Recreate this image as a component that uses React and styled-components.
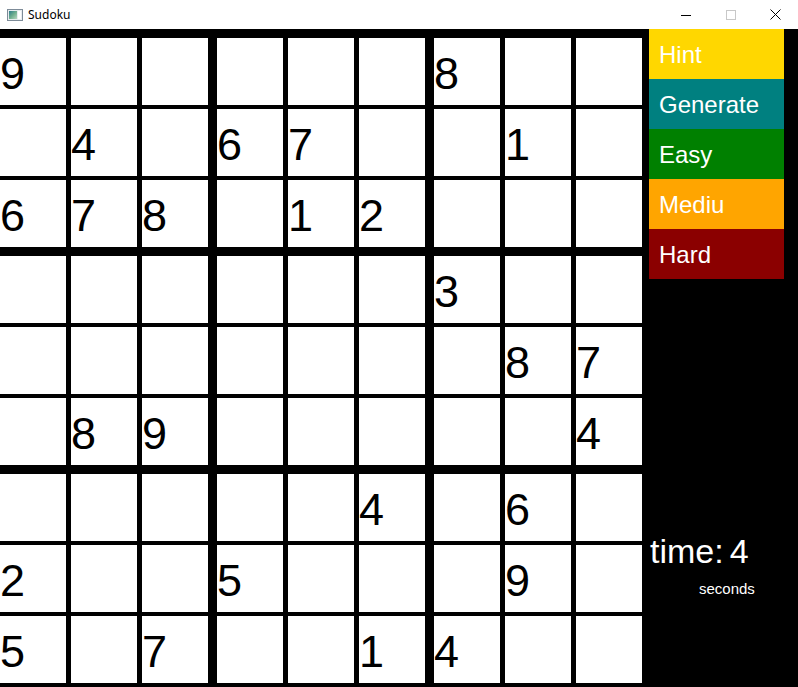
import React from 'react';
import styled, { createGlobalStyle } from 'styled-components';

/// /////////////////////////////////////////////
// data
/// /////////////////////////////////////////////

const puzzle = [
  '9.....8..',
  '.4.67..1.',
  '678.12...',
  '......3..',
  '.......87',
  '.89.....4',
  '.....4.6.',
  '2..5...9.',
  '5.7..14..',
];

const buttons = [
  { label: 'Hint', color: '#ffd700' },
  { label: 'Generate', color: '#008080' },
  { label: 'Easy', color: '#008000' },
  { label: 'Mediu', color: '#ffa500' },
  { label: 'Hard', color: '#8b0000' },
];

/// /////////////////////////////////////////////
// styled
/// /////////////////////////////////////////////

const Global = createGlobalStyle`
  html, body {
    margin: 0;
    padding: 0;
    background: #000;
    overflow: hidden;
  }
  * {
    box-sizing: border-box;
  }
`;

const Window = styled.div`
  width: 798px;
  height: 687px;
  display: flex;
  flex-direction: column;
  background: #000;
  font-family: 'Liberation Sans', Arial, sans-serif;
`;

const TitleBar = styled.div`
  height: 29px;
  flex: none;
  display: flex;
  align-items: center;
  background: #fff;
`;

const AppIcon = styled.svg`
  width: 16px;
  height: 16px;
  margin-left: 7px;
  margin-right: 5px;
`;

const Caption = styled.div`
  flex: 1;
  font-family: 'Noto Sans', 'DejaVu Sans', sans-serif;
  font-size: 12px;
  color: #000;
  padding-bottom: 1px;
`;

const Control = styled.div`
  width: 45px;
  height: 29px;
  display: flex;
  align-items: center;
  justify-content: center;
`;

const Main = styled.div`
  flex: 1;
  display: flex;
`;

const Board = styled.div`
  width: 643px;
  padding-top: 9px;
  display: grid;
  grid-template-columns: repeat(3, 208px);
  grid-template-rows: repeat(3, 209px);
  column-gap: 9px;
  row-gap: 9px;
`;

const Box = styled.div`
  display: grid;
  grid-template-columns: repeat(3, 66px);
  grid-template-rows: repeat(3, 67px);
  column-gap: 5px;
  row-gap: 4px;
`;

const Cell = styled.div`
  background: #fff;
  color: #000;
  font-size: 45px;
  line-height: 45px;
  padding-top: 13px;
  padding-left: 0;
`;

const Side = styled.div`
  flex: 1;
  display: flex;
  flex-direction: column;
  padding-left: 6px;
`;

const Button = styled.div`
  width: 135px;
  height: 50px;
  line-height: 51px;
  padding-left: 10px;
  font-size: 24px;
  color: #fff;
  background: ${props => props.color};
`;

const Timer = styled.div`
  margin-top: 256px;
  padding-left: 1px;
  display: flex;
  gap: 6px;
  font-size: 34px;
  line-height: 33px;
  color: #fff;
`;

const Unit = styled.div`
  margin-top: 13px;
  margin-left: 50px;
  font-size: 15px;
  line-height: 15px;
  color: #fff;
`;

/// /////////////////////////////////////////////
// component
/// /////////////////////////////////////////////

const Icon = () => (
  <AppIcon viewBox="0 0 16 16">
    <defs>
      <linearGradient id="ico" x1="0" y1="0" x2="1" y2="1">
        <stop offset="0" stopColor="#2e7d8c" />
        <stop offset="0.5" stopColor="#6fae8f" />
        <stop offset="1" stopColor="#b9d7c0" />
      </linearGradient>
    </defs>
    <rect x="0.5" y="2.5" width="15" height="11" fill="#e8ecef" stroke="#7d8b98" />
    <rect x="2" y="4" width="8" height="8" fill="url(#ico)" />
    <rect x="11" y="4" width="3" height="8" fill="#ffffff" />
  </AppIcon>
);

const Controls = () => (
  <>
    <Control>
      <svg width="10" height="10" viewBox="0 0 10 10">
        <line x1="0" y1="5.5" x2="10" y2="5.5" stroke="#000" strokeWidth="1" />
      </svg>
    </Control>
    <Control>
      <svg width="10" height="10" viewBox="0 0 10 10">
        <rect x="0.5" y="0.5" width="9" height="9" fill="none" stroke="#c8c8c8" strokeWidth="1" />
      </svg>
    </Control>
    <Control>
      <svg width="11" height="11" viewBox="0 0 11 11">
        <path d="M0.5 0.5 L10.5 10.5 M10.5 0.5 L0.5 10.5" stroke="#000" strokeWidth="1" />
      </svg>
    </Control>
  </>
);

const Grid = () => {
  const boxes = [];
  for (let b = 0; b < 9; b++) {
    const br = Math.floor(b / 3) * 3;
    const bc = (b % 3) * 3;
    const cells = [];
    for (let i = 0; i < 9; i++) {
      const ch = puzzle[br + Math.floor(i / 3)][bc + (i % 3)];
      cells.push(<Cell key={i}>{ch === '.' ? '' : ch}</Cell>);
    }
    boxes.push(<Box key={b}>{cells}</Box>);
  }
  return <Board>{boxes}</Board>;
};

export default function App() {
  return (
    <Window>
      <Global />
      <TitleBar>
        <Icon />
        <Caption>Sudoku</Caption>
        <Controls />
      </TitleBar>
      <Main>
        <Grid />
        <Side>
          {buttons.map(b => (
            <Button key={b.label} color={b.color}>
              {b.label}
            </Button>
          ))}
          <Timer>
            <span>time:</span>
            <span>4</span>
          </Timer>
          <Unit>seconds</Unit>
        </Side>
      </Main>
    </Window>
  );
}
